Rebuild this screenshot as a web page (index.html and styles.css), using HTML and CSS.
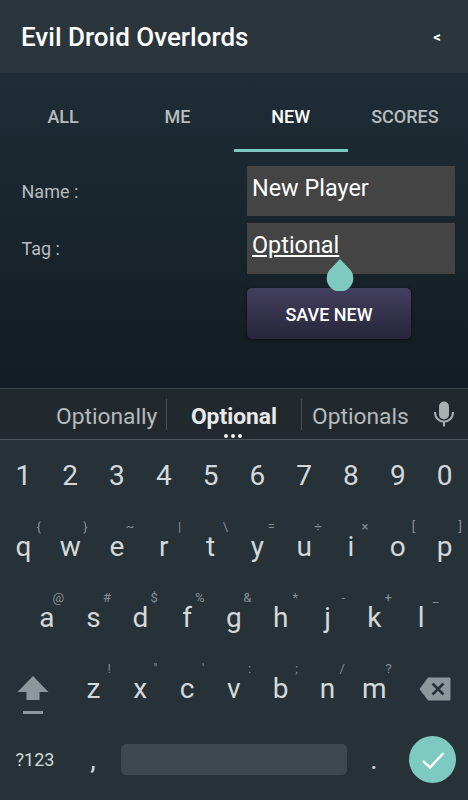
FILE: index.html
```html
<!DOCTYPE html>
<html lang="en">
<head>
    <meta charset="UTF-8">
    <meta name="viewport" content="width=device-width, initial-scale=1.0">
    <title>Evil Droid Overlords</title>
    <link rel="stylesheet" href="styles.css">
</head>
<body>
    <div class="app">
        <div class="app-bar">
            <h1>Evil Droid Overlords</h1>
            <span class="back">&lt;</span>
        </div>
        <div class="tabs">
            <div class="tab">ALL</div>
            <div class="tab">ME</div>
            <div class="tab active">NEW</div>
            <div class="tab">SCORES</div>
        </div>
        <div class="form">
            <div class="form-row">
                <span class="label">Name :</span>
                <div class="field">New Player</div>
            </div>
            <div class="form-row">
                <span class="label">Tag :</span>
                <div class="field field-tag"><u>Optional</u>
                    <svg class="handle" width="28" height="32" viewBox="0 0 28 32">
                        <path d="M14 0 L23 9.500 A13.300 13.300 0 1 1 5 9.500 Z" fill="#7ecac0"/>
                    </svg>
                </div>
            </div>
            <button class="save-btn">SAVE NEW</button>
        </div>
    </div>

    <div class="keyboard">
        <div class="suggestions">
            <div class="word word-left">Optionally</div>
            <div class="word word-main">Optional<span class="dots"></span></div>
            <div class="word word-right">Optionals</div>
            <svg class="mic" width="20" height="26" viewBox="0 0 20 26">
                <rect x="5" y="0.500" width="10" height="18" rx="5" fill="#a9b0b3"/>
                <path d="M1 11 C1 24 19 24 19 11" fill="none" stroke="#a9b0b3" stroke-width="2"/>
                <rect x="9" y="20" width="2" height="5.500" fill="#a9b0b3"/>
            </svg>
        </div>
        <div class="key-row">
            <div class="key">1</div><div class="key">2</div><div class="key">3</div><div class="key">4</div><div class="key">5</div>
            <div class="key">6</div><div class="key">7</div><div class="key">8</div><div class="key">9</div><div class="key">0</div>
        </div>
        <div class="key-row">
            <div class="key">q<span class="hint">{</span></div>
            <div class="key">w<span class="hint">}</span></div>
            <div class="key">e<span class="hint">~</span></div>
            <div class="key">r<span class="hint">|</span></div>
            <div class="key">t<span class="hint">\</span></div>
            <div class="key">y<span class="hint">=</span></div>
            <div class="key">u<span class="hint">÷</span></div>
            <div class="key">i<span class="hint">×</span></div>
            <div class="key">o<span class="hint">[</span></div>
            <div class="key">p<span class="hint">]</span></div>
        </div>
        <div class="key-row row-home">
            <div class="key">a<span class="hint">@</span></div>
            <div class="key">s<span class="hint">#</span></div>
            <div class="key">d<span class="hint">$</span></div>
            <div class="key">f<span class="hint">%</span></div>
            <div class="key">g<span class="hint">&amp;</span></div>
            <div class="key">h<span class="hint">*</span></div>
            <div class="key">j<span class="hint">-</span></div>
            <div class="key">k<span class="hint">+</span></div>
            <div class="key">l<span class="hint">_</span></div>
        </div>
        <div class="key-row row-shift">
            <div class="key key-shift">
                <svg width="32" height="40" viewBox="0 0 32 40">
                    <path d="M16 1 L31.500 17 L22.500 17 L22.500 25 L9.500 25 L9.500 17 L0.500 17 Z" fill="#8d989d"/>
                    <rect x="6" y="36" width="20" height="3" fill="#8d989d"/>
                </svg>
            </div>
            <div class="key">z<span class="hint">!</span></div>
            <div class="key">x<span class="hint">"</span></div>
            <div class="key">c<span class="hint">'</span></div>
            <div class="key">v<span class="hint">:</span></div>
            <div class="key">b<span class="hint">;</span></div>
            <div class="key">n<span class="hint">/</span></div>
            <div class="key">m<span class="hint">?</span></div>
            <div class="key key-delete">
                <svg width="32" height="24" viewBox="0 0 32 24">
                    <path d="M9 0.500 H30 A1.500 1.500 0 0 1 31.500 2 V22 A1.500 1.500 0 0 1 30 23.500 H9 L0.500 12 Z" fill="#8d989d"/>
                    <path d="M13.500 6.500 L24.500 17.500 M24.500 6.500 L13.500 17.500" stroke="#263238" stroke-width="2.600"/>
                </svg>
            </div>
        </div>
        <div class="key-row row-bottom">
            <div class="key key-sym">?123</div>
            <div class="key key-punct">,</div>
            <div class="space-bar"></div>
            <div class="key key-punct">.</div>
            <div class="key key-enter">
                <div class="enter">
                    <svg width="24" height="20" viewBox="0 0 24 20">
                        <path d="M2 11 L9 17.500 L22.500 3" fill="none" stroke="#ffffff" stroke-width="2.400"/>
                    </svg>
                </div>
            </div>
        </div>
    </div>
</body>
</html>
```

FILE: styles.css
```css
html, body {
    margin: 0;
    padding: 0;
}
body {
    width: 468px;
    height: 800px;
    overflow: hidden;
    font-family: 'Roboto', sans-serif;
    background-color: #263238;
    color: #fff;
}
.app {
    height: 388px;
    background: linear-gradient(180deg, #1f2d36 73px, #131c22 100%);
}
.app-bar {
    height: 73px;
    box-sizing: border-box;
    padding: 0 27px 0 21px;
    display: flex;
    justify-content: space-between;
    align-items: center;
    background-color: #2b353c;
}
.app-bar h1 {
    margin: 0;
    font-size: 26px;
    font-weight: 500;
}
.back {
    font-size: 15px;
    font-weight: 700;
}
.tabs {
    display: flex;
    padding: 0 6px;
    height: 79px;
}
.tab {
    flex: 1;
    display: flex;
    justify-content: center;
    align-items: center;
    padding-top: 7px;
    box-sizing: border-box;
    font-size: 18px;
    font-weight: 500;
    color: #b6bcbf;
}
.tab.active {
    color: #fff;
    margin-left: -1px;
    border-bottom: 3px solid #7ecac0;
    padding-top: 10px;
}
.form {
    padding: 14px 13px 0 21.500px;
}
.form-row {
    display: flex;
    justify-content: space-between;
    margin-bottom: 7px;
}
.label {
    font-size: 18px;
    color: #b6bcbf;
    padding-top: 15px;
}
.field {
    width: 208px;
    height: 50px;
    box-sizing: border-box;
    padding: 7px 5px 0;
    position: relative;
    background-color: #444444;
    font-size: 23.400px;
    line-height: 30px;
}
.field-tag {
    height: 51px;
}
.handle {
    position: absolute;
    left: 79px;
    top: 36px;
}
.save-btn {
    display: block;
    width: 164px;
    height: 51px;
    margin: 14px 0 0 225.500px;
    padding-top: 2px;
    border: none;
    border-radius: 5px;
    background: linear-gradient(180deg, #433f5f, #27253a);
    box-shadow: 0 1px 4px rgba(0,0,0,0.5);
    color: #fff;
    font-family: 'Roboto', sans-serif;
    font-size: 18px;
    font-weight: 500;
}
.keyboard {
    height: 412px;
}
.suggestions {
    height: 52px;
    box-sizing: border-box;
    display: flex;
    align-items: center;
    position: relative;
    background-color: #22292e;
    border-top: 1px solid #37444b;
    border-bottom: 1px solid #4a565c;
    font-size: 22.800px;
    color: #b4babd;
}
.word {
    text-align: center;
    height: 31px;
    line-height: 35px;
}
.word-left {
    width: 167px;
    box-sizing: border-box;
    padding-left: 56px;
    text-align: left;
    border-right: 1px solid #4a5156;
}
.word-main {
    width: 134px;
    font-weight: 700;
    color: #e8eaeb;
    position: relative;
}
.word-right {
    width: 119px;
    box-sizing: border-box;
    padding-left: 10px;
    text-align: left;
    border-left: 1px solid #4a5156;
}
.dots {
    position: absolute;
    left: 57px;
    bottom: -8px;
    width: 4px;
    height: 4px;
    border-radius: 50%;
    background-color: #f0f0f0;
    box-shadow: 7px 0 #f0f0f0, 14px 0 #f0f0f0;
}
.mic {
    margin-left: 14px;
}
.key-row {
    display: flex;
    height: 71px;
}
.row-home {
    padding: 0 23.400px;
}
.key {
    flex: 1;
    display: flex;
    justify-content: center;
    align-items: center;
    position: relative;
    font-size: 28px;
    font-weight: 400;
    color: #d4d8da;
}
.hint {
    position: absolute;
    top: 8px;
    right: 6px;
    font-size: 13px;
    font-weight: 400;
    color: #858f94;
}
.key-shift {
    flex: 0 0 65px;
    margin-right: 5px;
    padding-top: 13px;
    box-sizing: border-box;
}
.key-delete {
    flex: 0 0 70.400px;
    padding-left: 4.400px;
    box-sizing: border-box;
}
.key-sym {
    flex: 0 0 70px;
    font-size: 18px;
}
.key-punct {
    flex: 0 0 46px;
}
.space-bar {
    width: 226px;
    height: 31px;
    margin: auto 4px auto 5px;
    border-radius: 5px;
    background-color: #3d484f;
}
.key-enter {
    flex: 0 0 71px;
}
.enter {
    width: 47px;
    height: 47px;
    border-radius: 50%;
    background-color: #7ecac0;
    display: flex;
    justify-content: center;
    align-items: center;
}
```
